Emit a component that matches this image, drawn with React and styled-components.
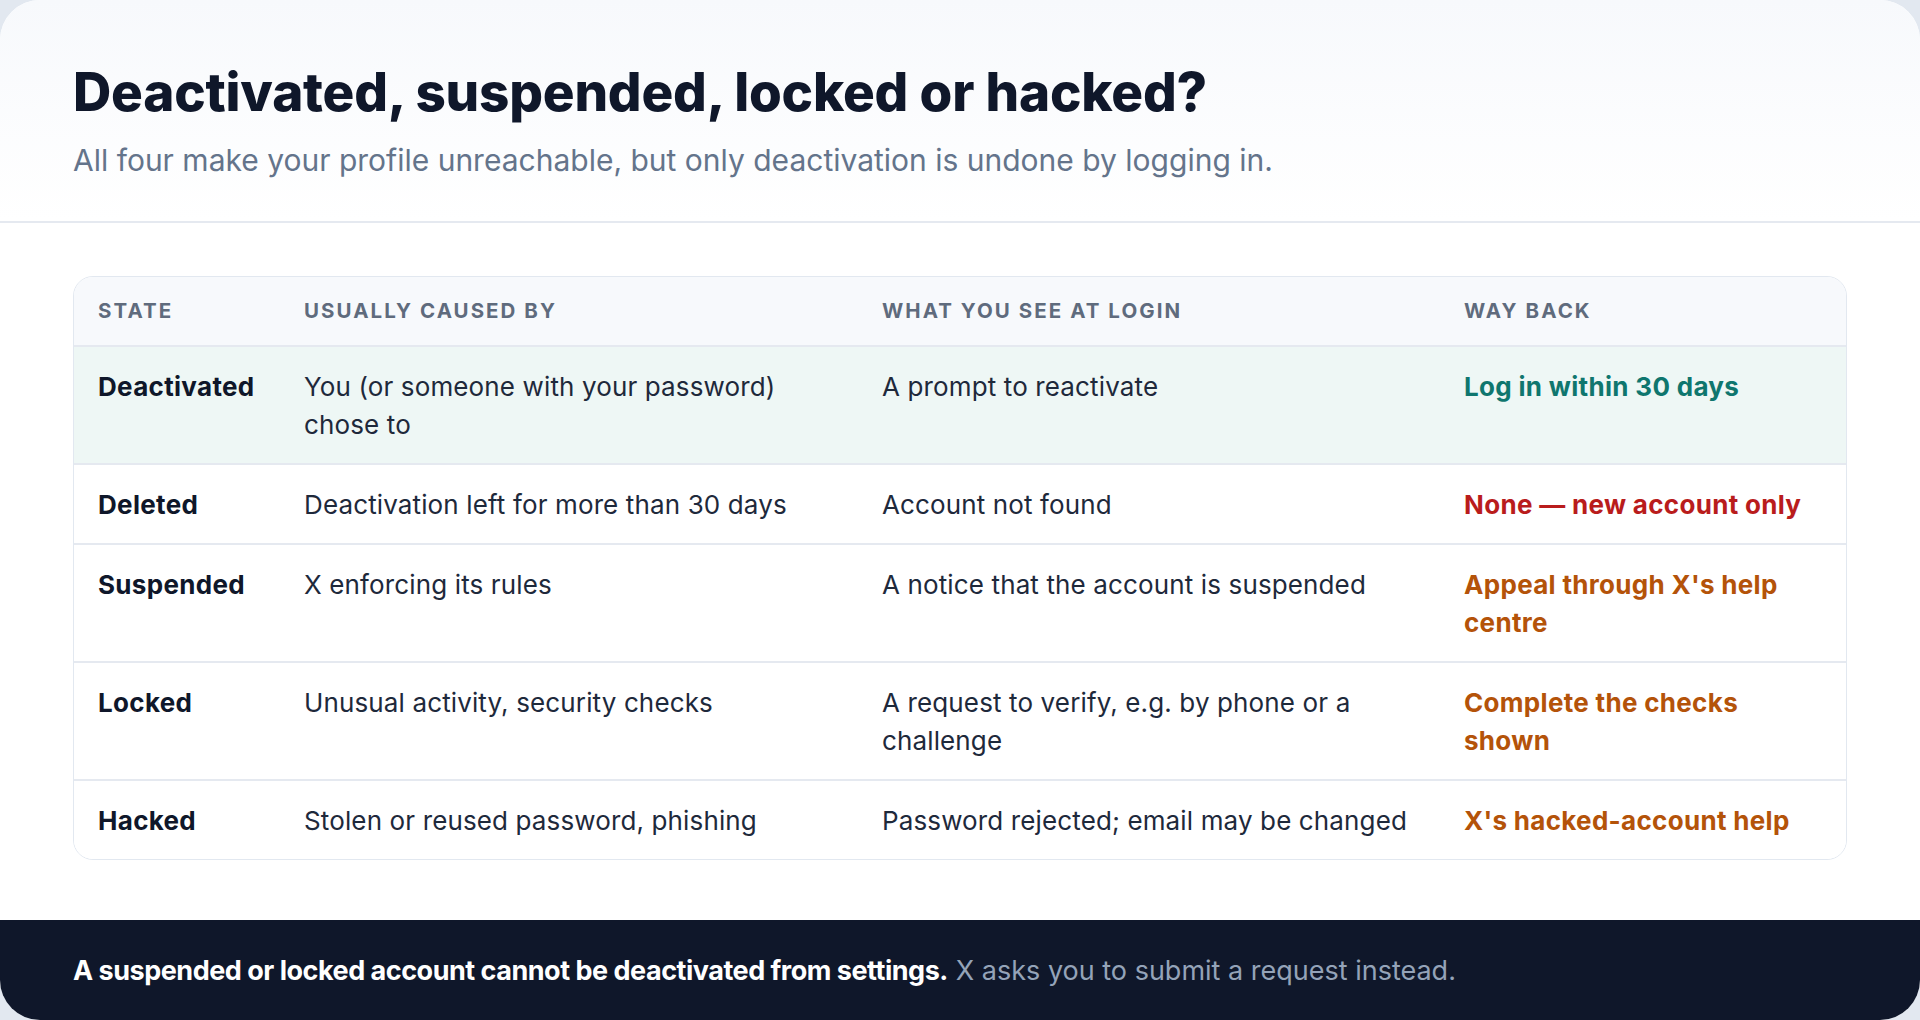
import React from 'react'
import styled, { createGlobalStyle } from 'styled-components'

const Global = createGlobalStyle`
  * { box-sizing: border-box; }
  html, body { margin: 0; padding: 0; }
  body {
    background: #e2e8f0;
    font-family: Inter, "Noto Sans", "Liberation Sans", sans-serif;
    -webkit-font-smoothing: antialiased;
  }
`

const Card = styled.div`
  width: 100%;
  height: 100vh;
  background: #ffffff;
  border-radius: 40px;
  overflow: hidden;
  display: flex;
  flex-direction: column;
`

const Header = styled.header`
  padding: 62px 73px 38px;
  background: linear-gradient(180deg, #f7f9fc 0%, #ffffff 100%);
  border-bottom: 2px solid #e5e9f0;
`

const Title = styled.h1`
  margin: 0;
  font-size: 53px;
  line-height: 1.15;
  font-weight: 800;
  letter-spacing: -0.004em;
  color: #0f172a;
`

const Subtitle = styled.p`
  margin: 15px 0 0;
  font-size: 30px;
  line-height: 1.5;
  color: #64748b;
`

const Body = styled.main`
  flex: 1;
  padding: 53px 73px 0;
`

const Table = styled.div`
  border: 1.5px solid #e2e8f0;
  border-radius: 20px;
  overflow: hidden;
`

const Row = styled.div`
  display: grid;
  grid-template-columns: 206px 578px 582px 1fr;
  background: ${p => (p.$head ? '#f7f9fc' : p.$hl ? '#eef7f5' : '#ffffff')};
  border-top: ${p => (p.$first ? 'none' : '2px solid #e5e9f0')};
`

const HeadCell = styled.div`
  padding: 19px 24px 19px;
  font-size: 20.5px;
  line-height: 30px;
  font-weight: 700;
  letter-spacing: 0.1em;
  text-transform: uppercase;
  color: #5f6b7d;
`

const Cell = styled.div`
  padding: 21px 24px 19px;
  font-size: 26px;
  line-height: 38px;
  color: ${p => p.$color || '#1e293b'};
  font-weight: ${p => (p.$bold ? 700 : 400)};
  letter-spacing: ${p => (p.$bold ? '0.012em' : '0.005em')};
`

const Footer = styled.footer`
  height: 100px;
  background: #0f172a;
  padding: 0 73px;
  display: flex;
  align-items: center;
  font-size: 27px;
  color: #94a3b8;
`

const Strong = styled.strong`
  color: #ffffff;
  font-weight: 700;
  letter-spacing: -0.018em;
  margin-right: 8px;
`

const tone = {
  good: '#0f766e',
  bad: '#b91c1c',
  warn: '#b45309',
}

const rows = [
  { state: 'Deactivated', cause: 'You (or someone with your password) chose to', see: 'A prompt to reactivate', back: 'Log in within 30 days', t: 'good', hl: true },
  { state: 'Deleted', cause: 'Deactivation left for more than 30 days', see: 'Account not found', back: 'None — new account only', t: 'bad' },
  { state: 'Suspended', cause: 'X enforcing its rules', see: 'A notice that the account is suspended', back: "Appeal through X's help centre", t: 'warn' },
  { state: 'Locked', cause: 'Unusual activity, security checks', see: 'A request to verify, e.g. by phone or a challenge', back: 'Complete the checks shown', t: 'warn' },
  { state: 'Hacked', cause: 'Stolen or reused password, phishing', see: 'Password rejected; email may be changed', back: "X's hacked-account help", t: 'warn' },
]

export default function App() {
  return (
    <>
      <Global />
      <Card>
        <Header>
          <Title>Deactivated, suspended, locked or hacked?</Title>
          <Subtitle>All four make your profile unreachable, but only deactivation is undone by logging in.</Subtitle>
        </Header>
        <Body>
          <Table>
            <Row $head $first>
              <HeadCell>State</HeadCell>
              <HeadCell>Usually caused by</HeadCell>
              <HeadCell>What you see at login</HeadCell>
              <HeadCell>Way back</HeadCell>
            </Row>
            {rows.map(r => (
              <Row key={r.state} $hl={r.hl}>
                <Cell $bold $color="#0f172a">{r.state}</Cell>
                <Cell>{r.cause}</Cell>
                <Cell>{r.see}</Cell>
                <Cell $bold $color={tone[r.t]}>{r.back}</Cell>
              </Row>
            ))}
          </Table>
        </Body>
        <Footer>
          <Strong>A suspended or locked account cannot be deactivated from settings.</Strong>
          X asks you to submit a request instead.
        </Footer>
      </Card>
    </>
  )
}
